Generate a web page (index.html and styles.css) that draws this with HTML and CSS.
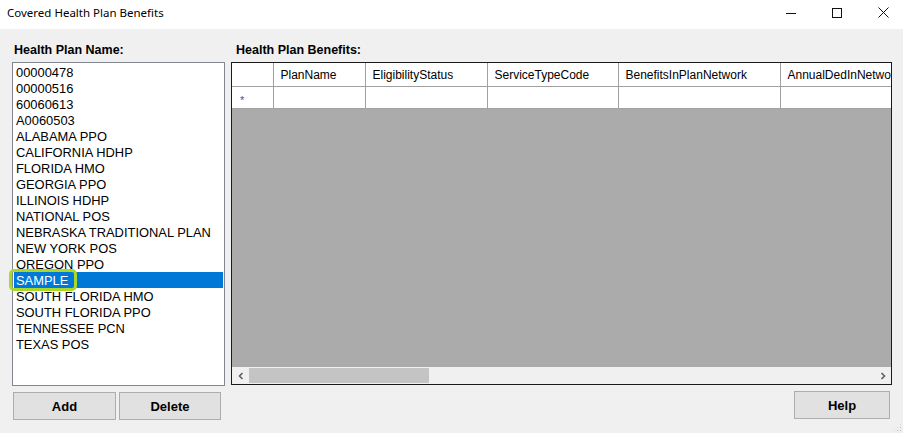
FILE: index.html
```html
<!DOCTYPE html>
<html lang="en">
<head>
  <meta charset="UTF-8" />
  <title>Covered Health Plan Benefits</title>
  <link rel="stylesheet" href="styles.css">
</head>
<body>
  <header class="titlebar">
    <div class="title">Covered Health Plan Benefits</div>
    <div class="controls">
      <span class="ctl"><svg width="10" height="10" viewBox="0 0 10 10"><path d="M0 5.5h10" stroke="#111" stroke-width="1"/></svg></span>
      <span class="ctl"><svg width="10" height="10" viewBox="0 0 10 10"><rect x="0.5" y="0.5" width="9" height="9" fill="none" stroke="#111" stroke-width="1"/></svg></span>
      <span class="ctl"><svg width="11" height="11" viewBox="0 0 11 11"><path d="M0.5 0.5l10 10M10.5 0.5l-10 10" stroke="#111" stroke-width="1"/></svg></span>
    </div>
  </header>

  <main class="dialog">
    <div class="panel left">
      <div class="caption">Health Plan Name:</div>
      <ul class="listbox">
        <li>00000478</li>
        <li>00000516</li>
        <li>60060613</li>
        <li>A0060503</li>
        <li>ALABAMA PPO</li>
        <li>CALIFORNIA HDHP</li>
        <li>FLORIDA HMO</li>
        <li>GEORGIA PPO</li>
        <li>ILLINOIS HDHP</li>
        <li>NATIONAL POS</li>
        <li>NEBRASKA TRADITIONAL PLAN</li>
        <li>NEW YORK POS</li>
        <li>OREGON PPO</li>
        <li class="selected">SAMPLE<span class="callout"></span></li>
        <li>SOUTH FLORIDA HMO</li>
        <li>SOUTH FLORIDA PPO</li>
        <li>TENNESSEE PCN</li>
        <li>TEXAS POS</li>
      </ul>
      <div class="buttons">
        <button class="btn add">Add</button>
        <button class="btn del">Delete</button>
      </div>
    </div>

    <div class="panel right">
      <div class="caption">Health Plan Benefits:</div>
      <div class="grid">
        <div class="grid-body">
          <table class="cells">
            <colgroup>
              <col style="width:41px">
              <col style="width:92px">
              <col style="width:122px">
              <col style="width:131px">
              <col style="width:162px">
              <col style="width:150px">
            </colgroup>
            <thead>
              <tr>
                <th class="rowhead"></th>
                <th>PlanName</th>
                <th>EligibilityStatus</th>
                <th>ServiceTypeCode</th>
                <th>BenefitsInPlanNetwork</th>
                <th>AnnualDedInNetwork</th>
              </tr>
            </thead>
            <tbody>
              <tr>
                <td class="rowhead"><span class="star">*</span></td>
                <td></td><td></td><td></td><td></td><td></td>
              </tr>
            </tbody>
          </table>
        </div>
        <div class="hscroll">
          <span class="arrow"><svg width="8" height="8" viewBox="0 0 8 8"><path d="M5.5 1L2.5 4l3 3" fill="none" stroke="#606060" stroke-width="1.6"/></svg></span>
          <span class="track"><span class="thumb"></span></span>
          <span class="arrow"><svg width="8" height="8" viewBox="0 0 8 8"><path d="M2.5 1l3 3-3 3" fill="none" stroke="#606060" stroke-width="1.6"/></svg></span>
        </div>
      </div>
      <div class="buttons end">
        <button class="btn help">Help</button>
      </div>
    </div>
  </main>
  <span class="grip"></span>
</body>
</html>
```

FILE: styles.css
```css
body {
  margin: 0;
  width: 903px;
  height: 433px;
  overflow: hidden;
  background: #f0f0f0;
  font-family: 'Liberation Sans', Arial, sans-serif;
  font-size: 12px;
  color: #000;
  position: relative;
}

.titlebar {
  height: 29px;
  background: #fff;
  display: flex;
  align-items: center;
  justify-content: space-between;
}

.title {
  padding-left: 7px;
  font-family: 'Noto Sans', 'Liberation Sans', sans-serif;
  font-size: 11.5px;
  margin-top: -4px;
}

.controls {
  display: flex;
  margin-right: -3px;
  align-self: stretch;
}

.ctl {
  width: 46px;
  display: flex;
  align-items: center;
  justify-content: center;
  margin-top: -4px;
}

.dialog {
  display: grid;
  grid-template-columns: 213px 661px;
  column-gap: 6px;
  padding: 14px 0 0 12px;
}

.panel {
  display: flex;
  flex-direction: column;
}

.caption {
  font-weight: bold;
  font-size: 12.5px;
  line-height: 15px;
  padding-left: 2px;
  margin-bottom: 4px;
}

.right .caption {
  padding-left: 5px;
}

.listbox {
  list-style: none;
  margin: 0;
  padding: 1px 1px 0;
  height: 321px;
  background: #fff;
  border: 1px solid #828790;
  font-size: 12.9px;
}

.listbox li {
  height: 16px;
  line-height: 17px;
  padding-left: 2px;
  white-space: nowrap;
  position: relative;
}

.listbox li.selected {
  background: #0078d7;
  color: #fff;
}

.callout {
  position: absolute;
  left: -5px;
  top: -3px;
  width: 62px;
  height: 16px;
  border: 3px solid #a9d82a;
  border-radius: 5px;
}

.grid {
  height: 321px;
  border: 1px solid #1a1a1a;
  background: #ababab;
  display: flex;
  flex-direction: column;
  overflow: hidden;
}

.grid-body {
  flex: 1;
  overflow: hidden;
}

.cells {
  border-collapse: collapse;
  table-layout: fixed;
  width: 698px;
  background: #fff;
}

.cells th,
.cells td {
  border: 1px solid #a0a0a0;
  border-top: none;
  border-left: none;
  padding: 0 0 0 7px;
  text-align: left;
  font-weight: normal;
  white-space: nowrap;
  overflow: hidden;
}

.cells th {
  height: 23px;
  font-size: 12px;
}

.cells td {
  height: 21px;
}

.star {
  font-size: 11px;
  color: #555;
  position: relative;
  top: 2px;
  left: 1px;
}

.hscroll {
  height: 17px;
  background: #f0f0f0;
  display: flex;
  align-items: stretch;
}

.arrow {
  width: 17px;
  display: flex;
  align-items: center;
  justify-content: center;
}

.track {
  flex: 1;
  display: flex;
  align-items: stretch;
  padding: 1px 0;
}

.thumb {
  width: 180px;
  background: #c4c4c4;
}

.buttons {
  display: flex;
  gap: 3px;
  margin-top: 6px;
  padding-left: 1px;
}

.buttons.end {
  justify-content: flex-end;
  padding-right: 2px;
}

.btn {
  height: 28px;
  background: #e1e1e1;
  border: 1px solid #adadad;
  font-family: 'Liberation Sans', Arial, sans-serif;
  font-weight: bold;
  font-size: 13px;
  color: #000;
  padding: 0;
}

.add { width: 103px; }
.del { width: 102px; }
.help { width: 96px; }

.grip {
  position: absolute;
  right: 1px;
  bottom: 1px;
  width: 9px;
  height: 9px;
  background: radial-gradient(circle, #b8b8b8 0.8px, transparent 1px) 0 0 / 3px 3px;
  clip-path: polygon(100% 0, 100% 100%, 0 100%);
}
```
